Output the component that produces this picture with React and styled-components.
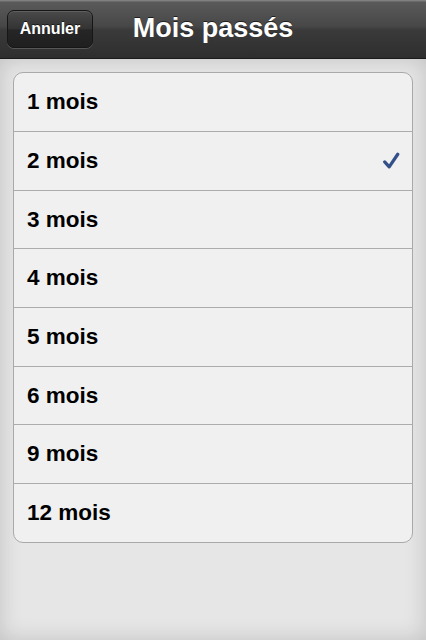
import styled, { createGlobalStyle } from "styled-components";

const GlobalStyle = createGlobalStyle`
    html, body {
        margin: 0;
        padding: 0;
        height: 100%;
    }
    body {
        font-family: "Liberation Sans", Arial, sans-serif;
    }
    #root {
        height: 100%;
    }
`;

const months = [1, 2, 3, 4, 5, 6, 9, 12];
const selected = 2;

const App = () => {
    return (
        <Screen>
            <GlobalStyle />
            <NavBar>
                <BackButton>Annuler</BackButton>
                <Title>Mois passés</Title>
            </NavBar>
            <Content>
                <Table>
                    {months.map((m) => (
                        <Row key={m}>
                            <Label>{m} mois</Label>
                            {m === selected && (
                                <Check viewBox="0 0 20 20">
                                    <path d="M3 11 L8 16.5 L17.5 2.5" />
                                </Check>
                            )}
                        </Row>
                    ))}
                </Table>
            </Content>
        </Screen>
    );
};

const Screen = styled.div`
    width: 426px;
    height: 640px;
    display: flex;
    flex-direction: column;
    overflow: hidden;
`;

const NavBar = styled.div`
    height: 58px;
    flex-shrink: 0;
    position: relative;
    display: flex;
    align-items: center;
    justify-content: center;
    background: linear-gradient(to bottom, #8a8a8a 0%, #5a5a5a 4%, #474747 45%, #3a3a3a 52%, #2e2e2e 100%);
    border-bottom: 1px solid #1a1a1a;
`;

const BackButton = styled.div`
    position: absolute;
    left: 7px;
    top: 10px;
    width: 86px;
    height: 38px;
    box-sizing: border-box;
    border-radius: 7px;
    border: 1px solid #161616;
    background: linear-gradient(to bottom, #4a4a4a 0%, #333 50%, #262626 52%, #1f1f1f 100%);
    box-shadow: 0 1px 0 rgba(255, 255, 255, 0.18), inset 0 1px 0 rgba(255, 255, 255, 0.12);
    color: #fff;
    font-size: 16px;
    font-weight: bold;
    display: flex;
    align-items: center;
    justify-content: center;
    text-shadow: 0 -1px 0 rgba(0, 0, 0, 0.6);
`;

const Title = styled.h1`
    margin: 0 0 2px;
    color: #fff;
    font-size: 27px;
    font-weight: bold;
    text-shadow: 0 -1px 0 rgba(0, 0, 0, 0.6);
`;

const Content = styled.div`
    flex: 1;
    padding: 13px 13px 0;
    background: #e6e6e6;
    box-shadow: inset 0 0 22px rgba(0, 0, 0, 0.16);
`;

const Table = styled.div`
    background: #f0f0f0;
    border: 1px solid #a9a9a9;
    border-radius: 10px;
    overflow: hidden;
`;

const Row = styled.div`
    height: 58px;
    display: flex;
    align-items: center;
    justify-content: space-between;
    padding: 0 12px 0 13px;
    box-sizing: border-box;
    & + & {
        height: 58.7px;
        border-top: 1px solid #acacac;
    }
`;

const Label = styled.span`
    font-size: 22.5px;
    font-weight: bold;
    color: #000;
`;

const Check = styled.svg`
    width: 18px;
    height: 18px;
    fill: none;
    stroke: #34508a;
    stroke-width: 3.6;
    stroke-linecap: round;
    stroke-linejoin: round;
`;

export default App;
